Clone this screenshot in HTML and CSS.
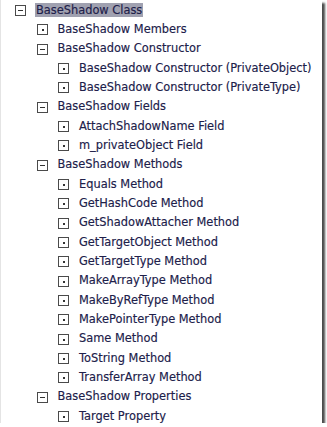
FILE: index.html
```html
<!DOCTYPE html>
<html lang="en">
<head>
  <meta charset="UTF-8" />
  <title>BaseShadow Class</title>
  <link rel="stylesheet" href="styles.css">
</head>
<body>
  <div class="frame">
    <ul class="tree">
      <li>
        <div class="node"><span class="box open"></span><span class="label selected">BaseShadow Class</span></div>
        <ul>
          <li><div class="node"><span class="box leaf"></span><span class="label">BaseShadow Members</span></div></li>
          <li>
            <div class="node"><span class="box open"></span><span class="label">BaseShadow Constructor</span></div>
            <ul>
              <li><div class="node"><span class="box leaf"></span><span class="label">BaseShadow Constructor (PrivateObject)</span></div></li>
              <li><div class="node"><span class="box leaf"></span><span class="label">BaseShadow Constructor (PrivateType)</span></div></li>
            </ul>
          </li>
          <li>
            <div class="node"><span class="box open"></span><span class="label">BaseShadow Fields</span></div>
            <ul>
              <li><div class="node"><span class="box leaf"></span><span class="label">AttachShadowName Field</span></div></li>
              <li><div class="node"><span class="box leaf"></span><span class="label">m_privateObject Field</span></div></li>
            </ul>
          </li>
          <li>
            <div class="node"><span class="box open"></span><span class="label">BaseShadow Methods</span></div>
            <ul>
              <li><div class="node"><span class="box leaf"></span><span class="label">Equals Method</span></div></li>
              <li><div class="node"><span class="box leaf"></span><span class="label">GetHashCode Method</span></div></li>
              <li><div class="node"><span class="box leaf"></span><span class="label">GetShadowAttacher Method</span></div></li>
              <li><div class="node"><span class="box leaf"></span><span class="label">GetTargetObject Method</span></div></li>
              <li><div class="node"><span class="box leaf"></span><span class="label">GetTargetType Method</span></div></li>
              <li><div class="node"><span class="box leaf"></span><span class="label">MakeArrayType Method</span></div></li>
              <li><div class="node"><span class="box leaf"></span><span class="label">MakeByRefType Method</span></div></li>
              <li><div class="node"><span class="box leaf"></span><span class="label">MakePointerType Method</span></div></li>
              <li><div class="node"><span class="box leaf"></span><span class="label">Same Method</span></div></li>
              <li><div class="node"><span class="box leaf"></span><span class="label">ToString Method</span></div></li>
              <li><div class="node"><span class="box leaf"></span><span class="label">TransferArray Method</span></div></li>
            </ul>
          </li>
          <li>
            <div class="node"><span class="box open"></span><span class="label">BaseShadow Properties</span></div>
            <ul>
              <li><div class="node"><span class="box leaf"></span><span class="label">Target Property</span></div></li>
            </ul>
          </li>
        </ul>
      </li>
    </ul>
  </div>
</body>
</html>
```

FILE: styles.css
```css
body {
  margin: 0;
  background: #fff;
  font-family: "DejaVu Sans", Verdana, sans-serif;
}
.frame {
  width: 321px;
  height: 423px;
  overflow: hidden;
  background: #fff;
  border-left: 1px solid #e4e4e4;
  box-shadow: 3px 3px 2px rgba(0, 0, 0, 0.7);
}
.tree, .tree ul {
  list-style: none;
  margin: 0;
  padding: 0;
}
.tree {
  padding-left: 14px;
}
.tree ul {
  padding-left: 21.5px;
}
.node {
  display: flex;
  align-items: center;
  height: 19.33px;
  font-size: 11.4px;
  color: #20204a;
  -webkit-text-stroke: 0.15px #20204a;
  white-space: nowrap;
}
.box {
  position: relative;
  flex: none;
  width: 9px;
  height: 9px;
  margin-top: 2px;
  margin-right: 10px;
  border: 1px solid #4a4a4a;
  background: #fff;
}
.box::after {
  content: "";
  position: absolute;
  background: #333;
}
.box.open::after {
  left: 2px;
  top: 4px;
  width: 5px;
  height: 1px;
}
.box.leaf::after {
  left: 4px;
  top: 4px;
  width: 2px;
  height: 2px;
}
.label.selected {
  background: #a0a1b0;
  padding: 0 1px;
  margin-left: -1px;
  line-height: 14px;
}
```
